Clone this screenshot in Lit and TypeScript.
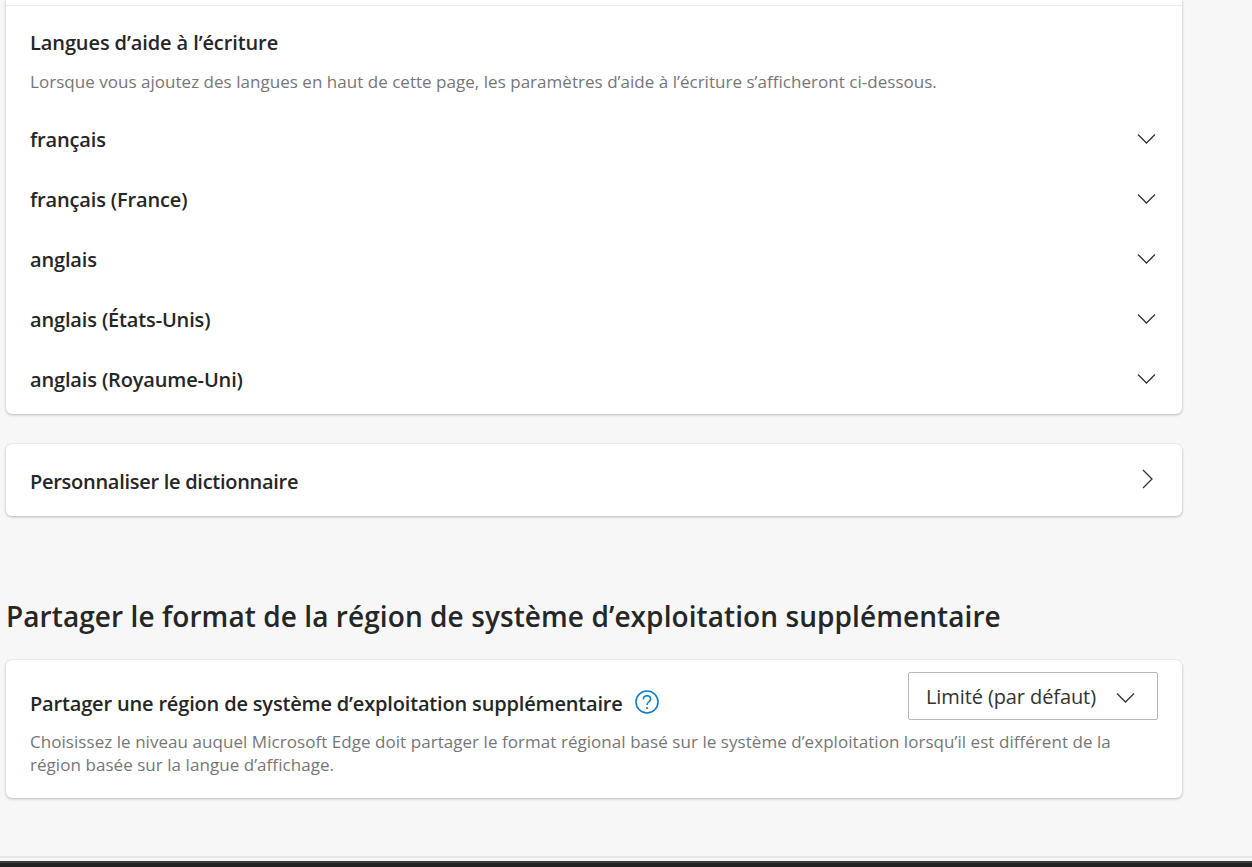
import { LitElement, css, html, svg } from "lit";
import { customElement } from "lit/decorators.js";

const languages = [
  "français",
  "français (France)",
  "anglais",
  "anglais (États-Unis)",
  "anglais (Royaume-Uni)",
];

const chevronDown = svg`<path d="M1 1.5 L9.5 10 L18 1.5" fill="none" stroke="#333" stroke-width="1.3" />`;

@customElement("app-root")
export class AppRoot extends LitElement {
  static styles = css`
    :host {
      display: flex;
      flex-direction: column;
      height: 867px;
      overflow: hidden;
      background: #f7f7f7;
      color: #262626;
      font-family: "Open Sans", "Noto Sans", sans-serif;
    }
    .page {
      flex: 1;
      width: 1176px;
      margin-left: 6px;
      min-height: 0;
    }
    .card {
      background: #fff;
      border-radius: 6px;
      box-shadow: 0 1px 3px rgba(0, 0, 0, 0.24), 0 0 2px rgba(0, 0, 0, 0.08);
    }
    .writing {
      height: 414px;
      border-radius: 0 0 6px 6px;
      padding-top: 5px;
      box-sizing: border-box;
    }
    .rule {
      height: 1px;
      background: #ebebeb;
    }
    .head {
      padding: 24px 24px 0;
    }
    .title {
      font-size: 20px;
      font-weight: 600;
      line-height: 26px;
      letter-spacing: -0.1px;
      white-space: nowrap;
    }
    .desc {
      font-size: 17px;
      line-height: 23px;
      color: #767676;
      letter-spacing: 0.03px;
    }
    .head .desc {
      margin-top: 14px;
      white-space: nowrap;
    }
    .lang-list {
      margin-top: 16px;
    }
    .lang {
      display: flex;
      align-items: center;
      justify-content: space-between;
      height: 60px;
      padding: 0 26px 0 24px;
    }
    .name {
      font-size: 20px;
      font-weight: 600;
      letter-spacing: -0.15px;
    }
    .lang svg {
      width: 19px;
      height: 12px;
    }
    .dictionary {
      display: flex;
      align-items: center;
      justify-content: space-between;
      height: 72px;
      margin-top: 30px;
      padding: 0 28px 0 24px;
    }
    .dictionary .name {
      margin-top: 2px;
      letter-spacing: -0.28px;
    }
    .dictionary svg {
      width: 12px;
      height: 20px;
      margin-top: -2px;
    }
    h2 {
      margin: 82px 0 0;
      font-size: 28px;
      line-height: 36px;
      font-weight: 600;
      letter-spacing: 0.08px;
      white-space: nowrap;
    }
    .region {
      margin-top: 26px;
      height: 138px;
      padding: 12px 24px 0;
      box-sizing: border-box;
    }
    .region-top {
      display: flex;
      justify-content: space-between;
      align-items: flex-start;
    }
    .region-label {
      display: flex;
      align-items: center;
      gap: 12px;
      margin-top: 18px;
    }
    .region-label .name {
      letter-spacing: -0.17px;
    }
    .help {
      width: 24px;
      height: 24px;
      margin-top: -4px;
    }
    .select {
      display: flex;
      align-items: center;
      justify-content: space-between;
      width: 250px;
      height: 48px;
      box-sizing: border-box;
      border: 1px solid #b8b8b8;
      border-radius: 2px;
      padding: 0 22px 0 17px;
      font-size: 20px;
      letter-spacing: -0.1px;
      color: #333;
    }
    .select svg {
      width: 19px;
      height: 12px;
      margin-top: 3px;
    }
    .region .desc {
      margin-top: 10px;
      letter-spacing: 0.05px;
    }
    .footer-line {
      height: 2px;
      background: #e6e6e6;
    }
    .footer-gap {
      height: 3px;
      background: #f7f7f7;
    }
    .taskbar {
      height: 6px;
      background: #212121;
      border-top: 2px solid #3c3c3c;
      box-sizing: border-box;
    }
  `;

  render() {
    return html`
      <div class="page">
        <section class="card writing">
          <div class="rule"></div>
          <div class="head">
            <div class="title">Langues d’aide à l’écriture</div>
            <div class="desc">
              Lorsque vous ajoutez des langues en haut de cette page, les
              paramètres d’aide à l’écriture s’afficheront ci-dessous.
            </div>
          </div>
          <div class="lang-list">
            ${languages.map(
              (name) => html`<div class="lang">
                <span class="name">${name}</span>
                <svg viewBox="0 0 19 12">${chevronDown}</svg>
              </div>`
            )}
          </div>
        </section>

        <section class="card dictionary">
          <span class="name">Personnaliser le dictionnaire</span>
          <svg viewBox="0 0 12 20">
            <path d="M1 1 L10 10 L1 19" fill="none" stroke="#333" stroke-width="1.3" />
          </svg>
        </section>

        <h2>Partager le format de la région de système d’exploitation supplémentaire</h2>

        <section class="card region">
          <div class="region-top">
            <div class="region-label">
              <span class="name">Partager une région de système d’exploitation supplémentaire</span>
              <svg class="help" viewBox="0 0 24 24">
                <circle cx="12" cy="12" r="11" fill="none" stroke="#0f7cc9" stroke-width="1.6" />
                <path d="M8.4 9.4 C8.4 7.2 10 5.8 12 5.8 C14 5.8 15.6 7.2 15.6 9.1 C15.6 11.7 12 11.9 12 15" fill="none" stroke="#0f7cc9" stroke-width="1.6" />
                <circle cx="12" cy="18" r="1.1" fill="#0f7cc9" />
              </svg>
            </div>
            <div class="select">
              <span>Limité (par défaut)</span>
              <svg viewBox="0 0 19 12">${chevronDown}</svg>
            </div>
          </div>
          <div class="desc">
            Choisissez le niveau auquel Microsoft Edge doit partager le format
            régional basé sur le système d’exploitation lorsqu’il est différent
            de la région basée sur la langue d’affichage.
          </div>
        </section>
      </div>
      <div class="footer-line"></div>
      <div class="footer-gap"></div>
      <div class="taskbar"></div>
    `;
  }
}
